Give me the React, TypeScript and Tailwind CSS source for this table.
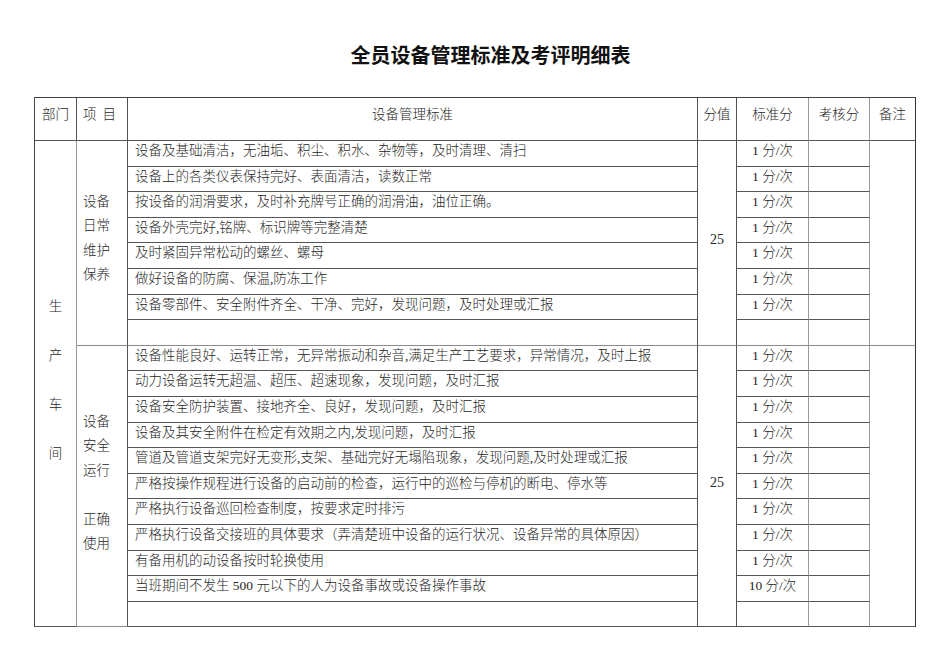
import React from 'react';

const FONT = "font-['Liberation_Serif','Noto_Sans_CJK_SC',serif]";

const routine = [
  '设备及基础清洁，无油垢、积尘、积水、杂物等，及时清理、清扫',
  '设备上的各类仪表保持完好、表面清洁，读数正常',
  '按设备的润滑要求，及时补充牌号正确的润滑油，油位正确。',
  '设备外壳完好,铭牌、标识牌等完整清楚',
  '及时紧固异常松动的螺丝、螺母',
  '做好设备的防腐、保温,防冻工作',
  '设备零部件、安全附件齐全、干净、完好，发现问题，及时处理或汇报',
  '',
];
const routineScore = ['1 分/次', '1 分/次', '1 分/次', '1 分/次', '1 分/次', '1 分/次', '1 分/次', ''];

const safety = [
  '设备性能良好、运转正常，无异常振动和杂音,满足生产工艺要求，异常情况，及时上报',
  '动力设备运转无超温、超压、超速现象，发现问题，及时汇报',
  '设备安全防护装置、接地齐全、良好，发现问题，及时汇报',
  '设备及其安全附件在检定有效期之内,发现问题，及时汇报',
  '管道及管道支架完好无变形,支架、基础完好无塌陷现象，发现问题,及时处理或汇报',
  '严格按操作规程进行设备的启动前的检查，运行中的巡检与停机的断电、停水等',
  '严格执行设备巡回检查制度，按要求定时排污',
  '严格执行设备交接班的具体要求（弄清楚班中设备的运行状况、设备异常的具体原因）',
  '有备用机的动设备按时轮换使用',
  '当班期间不发生 500 元以下的人为设备事故或设备操作事故',
  '',
];
const safetyScore = ['1 分/次', '1 分/次', '1 分/次', '1 分/次', '1 分/次', '1 分/次', '1 分/次', '1 分/次', '1 分/次', '10 分/次', ''];

const dark = 'border-r border-b border-[#555]';
const soft = 'border-r-[#9a9a9a]';

const Section = ({ items, scores, label, first, last }: any) => (
  <>
    {items.map((text: string, i: number) => {
      const end = i === items.length - 1 && !last;
      return (
        <tr key={i} className="h-[25.6px]">
          {first && i === 0 && (
            <td rowSpan={routine.length + safety.length} className={`${dark} ${soft} text-center align-middle pb-[8px]`}>
              {'生产车间'.split('').map((c) => (
                <div key={c} className="leading-[49px]">{c}</div>
              ))}
            </td>
          )}
          {i === 0 && (
            <td rowSpan={items.length} className={`${dark} border-b-[#8a8a8a] align-middle pl-[6px] ${first ? 'pb-[8px]' : 'pb-[6px]'}`}>
              {label.map((l: string, k: number) => (
                <div key={k} className="leading-[24.5px] h-[24.5px]">{l}</div>
              ))}
            </td>
          )}
          <td className={`${dark} ${end ? 'border-b-[#8a8a8a]' : ''} align-top pt-[1px] pl-[7px] whitespace-nowrap`}>{text}</td>
          {i === 0 && (
            <td rowSpan={items.length} className={`${dark} ${!last ? 'border-b-[#8a8a8a]' : ''} text-center align-middle pb-[6px] text-[14px]`}>25</td>
          )}
          <td className={`${dark} ${soft} ${end ? 'border-b-[#8a8a8a]' : ''} text-center align-top pt-[1px]`}>{scores[i]}</td>
          <td className={`${dark} ${soft} ${end ? 'border-b-[#8a8a8a]' : ''}`}></td>
          {i === 0 && (
            <td rowSpan={items.length} className={`${dark} border-r-[#333] ${!last ? 'border-b-[#8a8a8a]' : ''}`}></td>
          )}
        </tr>
      );
    })}
  </>
);

export default function App() {
  return (
    <div className={`w-[950px] h-[672px] bg-white text-[#262626] ${FONT}`}>
      <div className="pt-[42px] h-[97px] pl-[31px] text-center">
        <h1 className="font-['Noto_Sans_CJK_SC',sans-serif] font-bold text-[20px] leading-[26px] text-[#111]">
          全员设备管理标准及考评明细表
        </h1>
      </div>
      <table className="ml-[34px] table-fixed border-separate border-spacing-0 border-l border-t border-[#444] text-[13.5px] leading-[18px] font-light">
        <colgroup>
          <col className="w-[42px]" />
          <col className="w-[51px]" />
          <col className="w-[570px]" />
          <col className="w-[39px]" />
          <col className="w-[72px]" />
          <col className="w-[61px]" />
          <col className="w-[46px]" />
        </colgroup>
        <thead>
          <tr className="h-[43px]">
            <th className={`${dark} font-light text-center align-top pt-[8px]`}>部门</th>
            <th className={`${dark} font-light text-left align-top pt-[8px] pl-[6px]`}>
              项<span className="inline-block w-[6px]"></span>目
            </th>
            <th className={`${dark} font-light text-center align-top pt-[8px]`}>设备管理标准</th>
            <th className={`${dark} font-light text-center align-top pt-[8px]`}>分值</th>
            <th className={`${dark} ${soft} font-light text-center align-top pt-[8px]`}>标准分</th>
            <th className={`${dark} ${soft} font-light text-center align-top pt-[8px]`}>考核分</th>
            <th className={`${dark} border-r-[#333] font-light text-center align-top pt-[8px]`}>备注</th>
          </tr>
        </thead>
        <tbody>
          <Section items={routine} scores={routineScore} label={['设备', '日常', '维护', '保养']} first />
          <Section items={safety} scores={safetyScore} label={['设备', '安全', '运行', '', '正确', '使用']} last />
        </tbody>
      </table>
    </div>
  );
}
